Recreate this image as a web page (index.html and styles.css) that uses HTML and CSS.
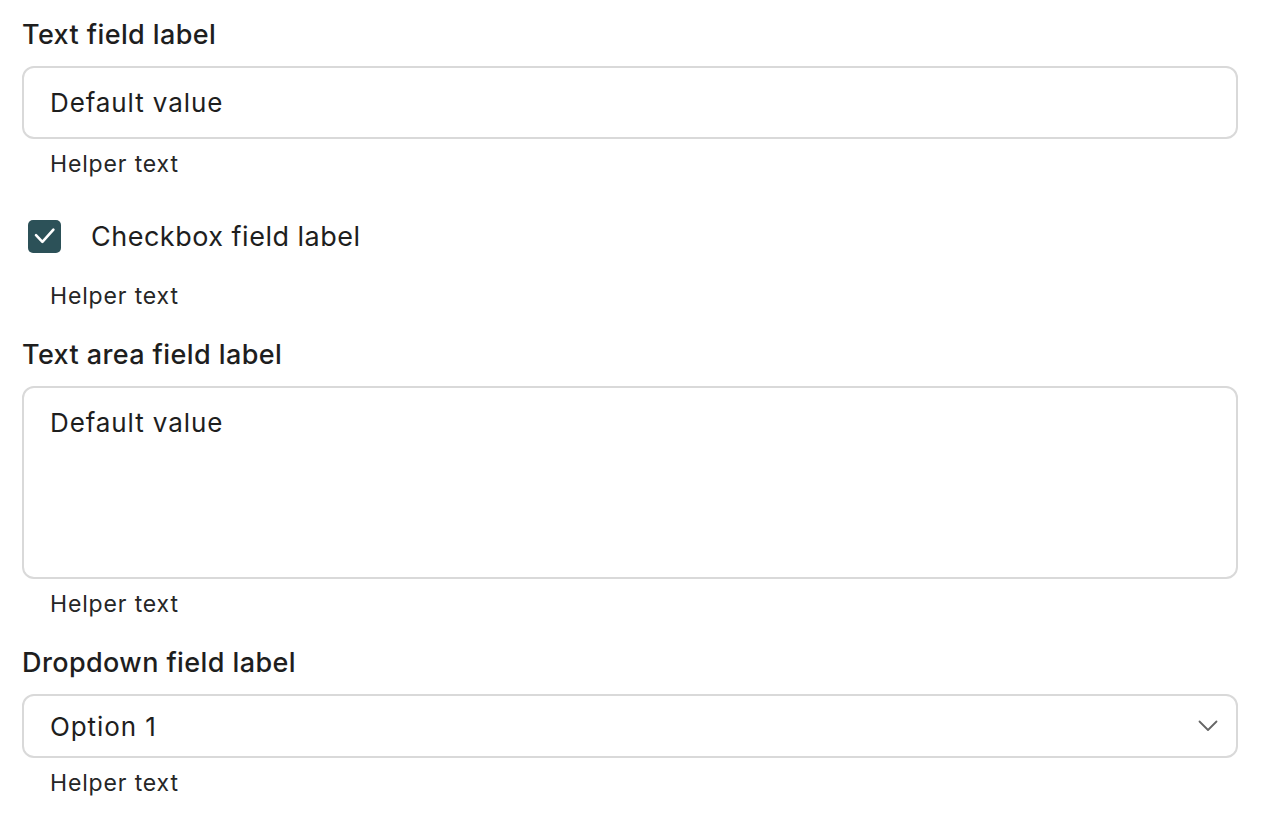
FILE: index.html
```html
<!DOCTYPE html>
<html lang="en">
<head>
  <meta charset="UTF-8">
  <title>Form fields</title>
  <link rel="stylesheet" href="styles.css">
</head>
<body>

  <div class="form">

    <div class="field">
      <label class="label">Text field label</label>
      <div class="input">Default value</div>
      <div class="helper">Helper text</div>
    </div>

    <div class="field check-field">
      <div class="check-row">
        <span class="checkbox">
          <svg width="33" height="33" viewBox="0 0 33 33">
            <path d="M8 15.2 L14.4 21.8 L25.4 9.6" fill="none" stroke="#fff" stroke-width="2.6" stroke-linecap="round" stroke-linejoin="round"/>
          </svg>
        </span>
        <span class="check-label">Checkbox field label</span>
      </div>
      <div class="helper">Helper text</div>
    </div>

    <div class="field">
      <label class="label">Text area field label</label>
      <div class="textarea">Default value</div>
      <div class="helper">Helper text</div>
    </div>

    <div class="field">
      <label class="label">Dropdown field label</label>
      <div class="input select">
        <span>Option 1</span>
        <svg class="chevron" width="20" height="12" viewBox="0 0 20 12">
          <path d="M1.5 1.5 L10 10 L18.5 1.5" fill="none" stroke="#666" stroke-width="1.8" stroke-linecap="round" stroke-linejoin="round"/>
        </svg>
      </div>
      <div class="helper">Helper text</div>
    </div>

  </div>

</body>
</html>
```

FILE: styles.css
```css
body {
  margin: 0;
  background-color: #ffffff;
  font-family: Inter, "Noto Sans", sans-serif;
  color: #1e1e1e;
}
.form {
  padding: 18px 24px 0 22px;
  display: flex;
  flex-direction: column;
  gap: 27px;
}
.field {
  display: flex;
  flex-direction: column;
}
.label {
  font-size: 27px;
  font-weight: 480;
  line-height: 34px;
  letter-spacing: 0.4px;
  margin-bottom: 14px;
}
.input {
  height: 73px;
  box-sizing: border-box;
  border: 2px solid #d9d9d9;
  border-radius: 12px;
  padding: 0 26px;
  display: flex;
  align-items: center;
  font-size: 26px;
  letter-spacing: 0.9px;
}
.textarea {
  height: 193px;
  box-sizing: border-box;
  border: 2px solid #d9d9d9;
  border-radius: 12px;
  padding: 19px 26px;
  font-size: 26px;
  line-height: 32px;
  letter-spacing: 0.9px;
}
.select {
  height: 64px;
  justify-content: space-between;
  padding-right: 18px;
}
.chevron {
  display: block;
}
.helper {
  font-size: 23px;
  line-height: 30px;
  margin-top: 10px;
  padding-left: 28px;
  color: #262626;
  letter-spacing: 0.85px;
}
.check-field {
  margin-top: 13px;
}
.check-row {
  display: flex;
  align-items: center;
  height: 34px;
  padding-left: 6px;
}
.checkbox {
  width: 33px;
  height: 33px;
  border-radius: 5px;
  background-color: #2c5158;
  display: block;
}
.checkbox svg {
  display: block;
}
.check-label {
  font-size: 27px;
  margin-left: 30px;
  letter-spacing: 0.5px;
}
.check-field .helper {
  margin-top: 28px;
}
```
